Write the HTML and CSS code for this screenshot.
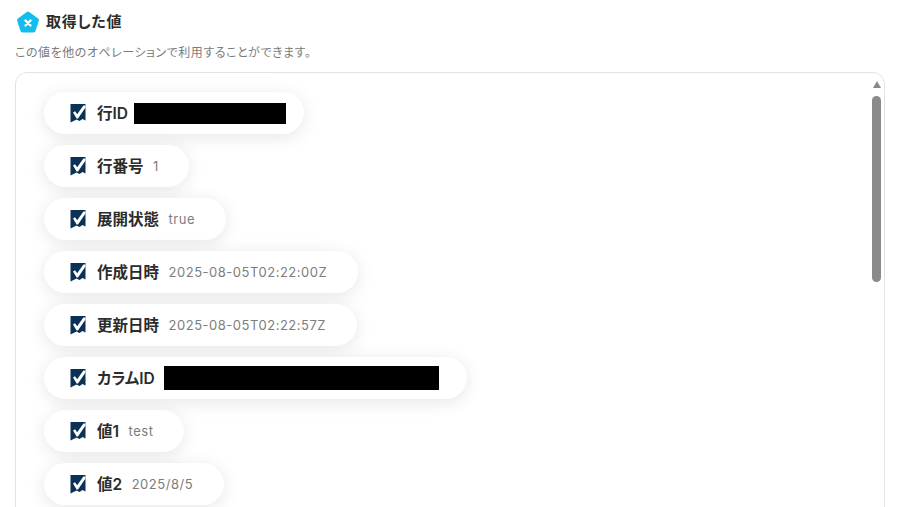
FILE: index.html
```html
<!DOCTYPE html>
<html lang="ja">
<head>
  <meta charset="UTF-8" />
  <meta name="viewport" content="width=device-width, initial-scale=1" />
  <title>取得した値</title>
  <link rel="stylesheet" href="styles.css">
</head>
<body>
  <!-- Symbols -->
  <svg class="defs" width="0" height="0">
    <symbol id="check" viewBox="0 0 16 20">
      <path fill="#0b3156" d="M0.5 1H15.5V17.5L12.5 16L9.5 18L6.5 16.5L0.5 19.5Z"/>
      <path fill="#fff" d="M3 9.4L5 8.2L7.2 11.2L13.4 2.6L15.5 2.6V4.4L8 15.5H6.6Z"/>
    </symbol>
  </svg>

  <div class="heading">
    <svg class="logo" width="24" height="24" viewBox="0 0 24 24">
      <path fill="#14bdec" stroke="#14bdec" stroke-width="4" stroke-linejoin="round" d="M12 3.5L21 10L17.6 20.5H6.4L3 10Z"/>
      <path fill="none" stroke="#fff" stroke-width="2.4" stroke-linecap="round" d="M9.5 10.5L14.5 15.5M14.5 10.5L9.5 15.5"/>
    </svg>
    <h2>取得した値</h2>
  </div>
  <p class="hint">この値を他のオペレーションで利用することができます。</p>

  <div class="panel">
    <ul class="values">
      <li class="pill">
        <svg class="check"><use href="#check"/></svg>
        <span class="name">行ID</span>
        <span class="redacted id-short"></span>
      </li>
      <li class="pill">
        <svg class="check"><use href="#check"/></svg>
        <span class="name">行番号</span>
        <span class="val">1</span>
      </li>
      <li class="pill">
        <svg class="check"><use href="#check"/></svg>
        <span class="name">展開状態</span>
        <span class="val">true</span>
      </li>
      <li class="pill">
        <svg class="check"><use href="#check"/></svg>
        <span class="name">作成日時</span>
        <span class="val">2025-08-05T02:22:00Z</span>
      </li>
      <li class="pill">
        <svg class="check"><use href="#check"/></svg>
        <span class="name">更新日時</span>
        <span class="val">2025-08-05T02:22:57Z</span>
      </li>
      <li class="pill">
        <svg class="check"><use href="#check"/></svg>
        <span class="name">カラムID</span>
        <span class="redacted id-long"></span>
      </li>
      <li class="pill">
        <svg class="check"><use href="#check"/></svg>
        <span class="name">値1</span>
        <span class="val">test</span>
      </li>
      <li class="pill">
        <svg class="check"><use href="#check"/></svg>
        <span class="name">値2</span>
        <span class="val">2025/8/5</span>
      </li>
    </ul>

    <!-- Scrollbar -->
    <div class="scrollbar">
      <div class="arrow"></div>
      <div class="thumb"></div>
    </div>
  </div>
</body>
</html>
```

FILE: styles.css
```css
/* Base Styles */
html, body {
  height: 507px;
  overflow: hidden;
}

body {
  margin: 0;
  padding: 10px 0 0 15px;
  box-sizing: border-box;
  background: #fff;
  color: #2c2c2c;
  font-family: "Inter", "Noto Sans CJK JP", sans-serif;
  font-feature-settings: "palt";
}

.defs {
  position: absolute;
}

/* Heading */
.heading {
  display: flex;
  align-items: center;
  gap: 6px;
  height: 24px;
  padding-left: 1px;
}

.logo {
  width: 24px;
  height: 24px;
}

h2 {
  margin: 0;
  font-size: 15px;
  font-weight: 700;
  line-height: 24px;
  letter-spacing: 0.05em;
}

.hint {
  margin: 9px 0 0;
  font-size: 12px;
  line-height: 20px;
  letter-spacing: 0.045em;
  color: #7b7b7b;
}

/* Panel */
.panel {
  display: flex;
  justify-content: space-between;
  width: 870px;
  height: 460px;
  margin-top: 9px;
  box-sizing: border-box;
  border: 1px solid #e3e3e3;
  border-radius: 12px;
}

/* List */
.values {
  list-style: none;
  margin: 0;
  padding: 19px 0 0 28px;
  display: flex;
  flex-direction: column;
  align-items: flex-start;
  gap: 11px;
}

.pill {
  display: flex;
  flex: none;
  align-items: center;
  height: 42px;
  padding: 0 30.5px 0 26px;
  border-radius: 21px;
  background: #fff;
  box-shadow: 0 3px 18px rgba(0, 0, 0, 0.1);
}

.check {
  flex: none;
  width: 16px;
  height: 20px;
  margin-right: 11px;
}

.name {
  padding-bottom: 2px;
  font-size: 15.5px;
  font-weight: 600;
  color: #2c2c2c;
}

.val {
  margin-left: 9.5px;
  font-size: 13px;
  letter-spacing: 0.04em;
  color: #7d7d7d;
}

.redacted {
  margin-left: 6px;
  background: #000;
}

.id-short { width: 152px; height: 21px; margin-right: -12.5px; }
.id-long  { width: 275px; height: 24px; margin-left: 9px; margin-right: -2.5px; }

/* Scrollbar */
.scrollbar {
  flex: none;
  width: 9px;
  margin: 8px 3px 0 0;
}

.arrow {
  width: 0;
  height: 0;
  margin: 0 auto;
  border-left: 4.5px solid transparent;
  border-right: 4.5px solid transparent;
  border-bottom: 7px solid #8a8a8a;
}

.thumb {
  height: 186px;
  margin-top: 8px;
  border-radius: 5px;
  background: #8a8a8a;
}
```
